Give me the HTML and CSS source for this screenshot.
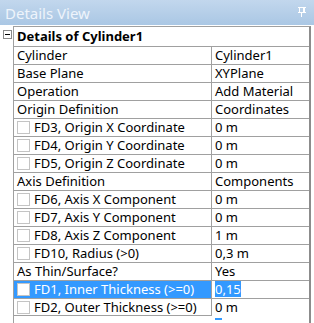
FILE: index.html
```html
<!DOCTYPE html>
<html lang="en">
<head>
    <meta charset="UTF-8">
    <title>Details View</title>
    <link rel="stylesheet" href="styles.css">
</head>
<body>

    <!-- Title bar -->
    <div class="titlebar">
        <span class="title">Details View</span>
        <svg class="pin" width="8" height="10" viewBox="0 0 8 10">
            <rect x="0" y="0" width="8" height="1" fill="#fff"/>
            <rect x="1" y="1" width="1" height="5" fill="#fff"/>
            <rect x="5" y="1" width="2" height="5" fill="#fff"/>
            <rect x="0" y="5" width="8" height="1" fill="#fff"/>
            <rect x="3" y="6" width="1" height="4" fill="#fff"/>
        </svg>
    </div>

    <div class="panel">
        <div class="gutter">
            <span class="toggle"></span>
        </div>

        <div class="grid">
            <div class="row header">Details of Cylinder1</div>

            <div class="row"><div class="label">Cylinder</div><div class="value">Cylinder1</div></div>
            <div class="row"><div class="label">Base Plane</div><div class="value">XYPlane</div></div>
            <div class="row"><div class="label">Operation</div><div class="value">Add Material</div></div>
            <div class="row"><div class="label">Origin Definition</div><div class="value">Coordinates</div></div>
            <div class="row"><div class="label"><span class="check"></span>FD3, Origin X Coordinate</div><div class="value">0 m</div></div>
            <div class="row"><div class="label"><span class="check"></span>FD4, Origin Y Coordinate</div><div class="value">0 m</div></div>
            <div class="row"><div class="label"><span class="check"></span>FD5, Origin Z Coordinate</div><div class="value">0 m</div></div>
            <div class="row"><div class="label">Axis Definition</div><div class="value">Components</div></div>
            <div class="row"><div class="label"><span class="check"></span>FD6, Axis X Component</div><div class="value">0 m</div></div>
            <div class="row"><div class="label"><span class="check"></span>FD7, Axis Y Component</div><div class="value">0 m</div></div>
            <div class="row"><div class="label"><span class="check"></span>FD8, Axis Z Component</div><div class="value">1 m</div></div>
            <div class="row"><div class="label"><span class="check"></span>FD10, Radius (&gt;0)</div><div class="value">0,3 m</div></div>
            <div class="row"><div class="label">As Thin/Surface?</div><div class="value">Yes</div></div>
            <div class="row selected"><div class="label"><span class="check"></span>FD1, Inner Thickness (&gt;=0)</div><div class="value"><span class="sel-text">0,15</span></div></div>
            <div class="row last"><div class="label"><span class="check"></span>FD2, Outer Thickness (&gt;=0)</div><div class="value"><span class="caret-text">0 m</span></div></div>
        </div>
    </div>

</body>
</html>
```

FILE: styles.css
```css
body {
    margin: 0;
    background-color: white;
    font-family: "Noto Sans", "Open Sans", sans-serif;
    font-size: 13px;
    color: #000;
    width: 314px;
    height: 323px;
    overflow: hidden;
}

.titlebar {
    height: 25px;
    background: linear-gradient(#c2d7ed, #aac7e4);
    display: flex;
    align-items: center;
    justify-content: space-between;
    padding: 0 8px 0 5px;
}

.title {
    color: #eef4fb;
    font-size: 15px;
}

.pin {
    display: block;
    margin-top: -2px;
}

.panel {
    display: flex;
    margin-top: 1px;
    height: 297px;
}

.gutter {
    width: 13px;
    padding-top: 4px;
}

.toggle {
    display: block;
    width: 7px;
    height: 7px;
    margin-left: 3px;
    border: 1px solid #8a8a8a;
    position: relative;
}

.toggle::after {
    content: "";
    position: absolute;
    left: 1px;
    top: 3px;
    width: 5px;
    height: 1px;
    background-color: #000;
}

.grid {
    width: 295px;
    border-top: 1px solid #a0a0a0;
    border-left: 1px solid #a0a0a0;
    border-right: 2px solid #8c8c8c;
}

.row {
    display: flex;
    height: 17px;
    border-bottom: 1px solid #a0a0a0;
    line-height: 17px;
    white-space: nowrap;
}

.header {
    height: 19px;
    line-height: 19px;
    font-weight: bold;
    padding-left: 3px;
}

.label {
    width: 194px;
    padding-left: 3px;
    border-right: 1px solid #a0a0a0;
    display: flex;
    align-items: center;
    overflow: hidden;
}

.value {
    padding-left: 3px;
}

.check {
    display: inline-block;
    width: 11px;
    height: 11px;
    border: 1px solid #c4c4c4;
    background-color: white;
    margin-right: 4px;
    flex-shrink: 0;
}

.selected .label {
    background-color: #3399ff;
    color: white;
}

.sel-text {
    background-color: #3399ff;
    color: white;
    display: inline-block;
    line-height: 16px;
}

.last {
    border-bottom: none;
}

.last .label {
    border-bottom: 1px solid #a0a0a0;
}

.caret-text {
    display: inline-block;
    position: relative;
}

.caret-text::after {
    content: "";
    position: absolute;
    left: 0;
    bottom: -4px;
    width: 7px;
    height: 2px;
    background-color: #3399ff;
}
```
